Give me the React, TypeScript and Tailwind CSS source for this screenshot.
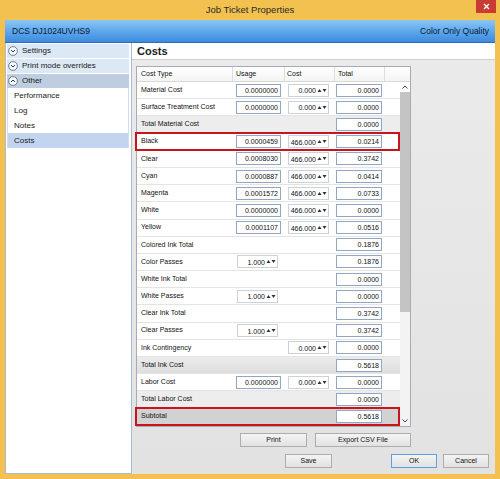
import React from 'react';

type Row = {
  label: string;
  usage?: string;
  passes?: string;
  cost?: string;
  total: string;
  kind?: 'plain' | 'sum' | 'ink' | 'subtotal';
  mark?: boolean;
};

const rows: Row[] = [
  { label: 'Material Cost', usage: '0.0000000', cost: '0.000', total: '0.0000' },
  { label: 'Surface Treatment Cost', usage: '0.0000000', cost: '0.000', total: '0.0000' },
  { label: 'Total Material Cost', total: '0.0000', kind: 'sum' },
  { label: 'Black', usage: '0.0000459', cost: '466.000', total: '0.0214', mark: true },
  { label: 'Clear', usage: '0.0008030', cost: '466.000', total: '0.3742' },
  { label: 'Cyan', usage: '0.0000887', cost: '466.000', total: '0.0414' },
  { label: 'Magenta', usage: '0.0001572', cost: '466.000', total: '0.0733' },
  { label: 'White', usage: '0.0000000', cost: '466.000', total: '0.0000' },
  { label: 'Yellow', usage: '0.0001107', cost: '466.000', total: '0.0516' },
  { label: 'Colored Ink Total', total: '0.1876' },
  { label: 'Color Passes', passes: '1.000', total: '0.1876' },
  { label: 'White Ink Total', total: '0.0000' },
  { label: 'White Passes', passes: '1.000', total: '0.0000' },
  { label: 'Clear Ink Total', total: '0.3742' },
  { label: 'Clear Passes', passes: '1.000', total: '0.3742' },
  { label: 'Ink Contingency', cost: '0.000', total: '0.0000' },
  { label: 'Total Ink Cost', total: '0.5618', kind: 'ink' },
  { label: 'Labor Cost', usage: '0.0000000', cost: '0.000', total: '0.0000' },
  { label: 'Total Labor Cost', total: '0.0000', kind: 'sum' },
  { label: 'Subtotal', total: '0.5618', kind: 'subtotal', mark: true },
];

const rowBg: Record<string, string> = {
  plain: 'bg-white',
  sum: 'bg-[#ededed]',
  ink: 'bg-gradient-to-b from-[#ececec] to-[#dedede]',
  subtotal: 'bg-[#d2d2d2]',
};

function Field({ value, className }: { value: string; className: string }) {
  return (
    <div
      className={`h-[13px] border border-[#93a6c2] bg-white text-right pr-[2px] leading-[11px] text-[#111] ${className}`}
    >
      {value}
    </div>
  );
}

function Spinner({ value, className }: { value: string; className: string }) {
  return (
    <div className={`h-[13px] flex items-center border border-[#c9d2de] bg-white ${className}`}>
      <span className="flex-1 text-right leading-[11px] pt-[1px] text-[#111]">{value}</span>
      <svg width="10" height="5" viewBox="0 0 10 5" className="mx-[1px]">
        <path d="M0.5 4 L2.5 1 L4.5 4 Z" fill="#333" />
        <path d="M5.5 1 L9.5 1 L7.5 4 Z" fill="#333" />
      </svg>
    </div>
  );
}

function CircleChevron({ up }: { up?: boolean }) {
  return (
    <svg width="10" height="10" viewBox="0 0 10 10">
      <circle cx="5" cy="5" r="4.4" fill="#f7fafd" stroke="#55657c" strokeWidth="0.8" />
      <path d={up ? 'M3 6 L5 4 L7 6' : 'M3 4 L5 6 L7 4'} fill="none" stroke="#2c3a4e" strokeWidth="1" />
    </svg>
  );
}

function Button({ label, className }: { label: string; className: string }) {
  return (
    <div
      className={`h-[14px] flex items-center justify-center border bg-gradient-to-b from-[#f4f4f4] to-[#e2e2e2] text-[7px] text-[#111] ${className}`}
    >
      {label}
    </div>
  );
}

export default function App() {
  return (
    <div className="w-[500px] h-[479px] flex flex-col bg-[#f2c14f] font-['Liberation_Sans',Arial,sans-serif] overflow-hidden">
      {/* Title bar */}
      <div className="h-[20px] flex shrink-0">
        <div className="w-[24px]" />
        <div className="flex-1 text-center leading-[20px] text-[9.5px] text-[#2a2a2a]">Job Ticket Properties</div>
        <div className="w-[24px]">
          <div className="w-[20px] h-[13px] bg-[#c93a34] flex items-center justify-center">
            <svg width="7" height="7" viewBox="0 0 7 7">
              <path d="M1 1 L6 6 M6 1 L1 6" stroke="#fff" strokeWidth="1.4" />
            </svg>
          </div>
        </div>
      </div>

      <div className="flex-1 flex flex-col mx-[5px] mb-[5px] bg-[#e9e9e9]">
        {/* Blue header */}
        <div className="h-[23px] shrink-0 flex items-center justify-between pl-[7px] pr-[6px] bg-gradient-to-b from-[#8cc7f5] via-[#5ea8ec] to-[#3e8ade] border-b border-[#2f6cbf] text-[8.5px] text-[#0c1a36]">
          <span>DCS DJ1024UVHS9</span>
          <span>Color Only Quality</span>
        </div>

        <div className="flex-1 flex">
          {/* Sidebar */}
          <div className="w-[127px] bg-white border-l border-r border-b border-[#a9bcd6] pl-[1px] pr-[2px] pt-[1px] text-[8px] text-[#1a1a1a]">
            <div className="flex flex-col gap-[1px]">
              <div className="h-[14px] flex items-center gap-[4px] pl-[1px] bg-[#dce8f6]">
                <CircleChevron />
                <span>Settings</span>
              </div>
              <div className="h-[14px] flex items-center gap-[4px] pl-[1px] bg-[#dce8f6]">
                <CircleChevron />
                <span>Print mode overrides</span>
              </div>
              <div className="h-[14px] flex items-center gap-[4px] pl-[1px] bg-[#bfcde0]">
                <CircleChevron up />
                <span>Other</span>
              </div>
            </div>
            <div className="border-x border-[#d6dde8]">
              <div className="h-[15px] flex items-center pl-[6px]">Performance</div>
              <div className="h-[15px] flex items-center pl-[6px]">Log</div>
              <div className="h-[15px] flex items-center pl-[6px]">Notes</div>
              <div className="h-[15px] flex items-center pl-[6px] bg-[#c3d5ee]">Costs</div>
            </div>
          </div>

          {/* Main */}
          <div className="flex-1 flex flex-col bg-gradient-to-b from-[#ebebeb] to-[#e2e2e2]">
            <div className="h-[17px] shrink-0 bg-white border-b border-[#cfcfcf] pl-[5px] flex items-center text-[11px] font-bold text-[#1a1a1a]">
              Costs
            </div>

            {/* Table */}
            <div className="ml-[4px] mt-[6px] w-[275px] border border-[#a8abb3] bg-white text-[7px] text-[#111]">
              <div className="h-[15px] flex border-b border-[#d8d8d8] bg-gradient-to-b from-white to-[#f4f4f4]">
                <div className="w-[96px] pl-[4px] flex items-center border-r border-[#dedede]">Cost Type</div>
                <div className="w-[52px] pl-[3px] flex items-center border-r border-[#dedede]">Usage</div>
                <div className="w-[50px] pl-[2px] flex items-center border-r border-[#dedede]">Cost</div>
                <div className="w-[50px] pl-[3px] flex items-center border-r border-[#dedede]">Total</div>
                <div className="flex-1" />
              </div>
              <div className="flex">
                <div className="w-[263px]">
                  {rows.map((r) => (
                    <div
                      key={r.label}
                      className={`relative h-[17.2px] flex items-center border-b border-[#e4e4e4] ${rowBg[r.kind ?? 'plain']}`}
                    >
                      <div className="w-[96px] pl-[4px] whitespace-nowrap">{r.label}</div>
                      <div className="w-[52px]">
                        {r.usage && <Field value={r.usage} className="ml-[3px] w-[45px]" />}
                        {r.passes && <Spinner value={r.passes} className="ml-[4px] w-[41px]" />}
                      </div>
                      <div className="w-[50px]">
                        {r.cost && <Spinner value={r.cost} className="ml-[3px] w-[41px]" />}
                      </div>
                      <div className="w-[50px]">
                        <Field value={r.total} className="ml-[1px] w-[46px]" />
                      </div>
                      <div className="flex-1" />
                      {r.mark && (
                        <div className="absolute -left-[2px] -top-[2px] right-0 -bottom-[1px] border-2 border-[#c8141c] z-10" />
                      )}
                    </div>
                  ))}
                </div>
                {/* Scrollbar */}
                <div className="w-[10px] flex flex-col bg-[#f3f3f3]">
                  <div className="h-[10px] flex items-center justify-center bg-white">
                    <svg width="6" height="4" viewBox="0 0 6 4">
                      <path d="M0.5 3.5 L3 1 L5.5 3.5" fill="none" stroke="#444" strokeWidth="1" />
                    </svg>
                  </div>
                  <div className="h-[220px] bg-[#c4c4c4]" />
                  <div className="flex-1" />
                  <div className="h-[10px] flex items-center justify-center">
                    <svg width="6" height="4" viewBox="0 0 6 4">
                      <path d="M0.5 0.5 L3 3 L5.5 0.5" fill="none" stroke="#444" strokeWidth="1" />
                    </svg>
                  </div>
                </div>
              </div>
            </div>

            <div className="flex mt-[6px]">
              <Button label="Print" className="ml-[108px] w-[67px] border-[#adadad]" />
              <Button label="Export CSV File" className="ml-[8px] w-[96px] border-[#adadad]" />
            </div>
            <div className="flex mt-[7px] mr-[6px]">
              <Button label="Save" className="ml-[153px] w-[47px] border-[#adadad]" />
              <div className="flex-1" />
              <Button label="OK" className="w-[46px] border-[#5f9fdc]" />
              <Button label="Cancel" className="ml-[6px] w-[46px] border-[#adadad]" />
            </div>
          </div>
        </div>
      </div>
    </div>
  );
}
